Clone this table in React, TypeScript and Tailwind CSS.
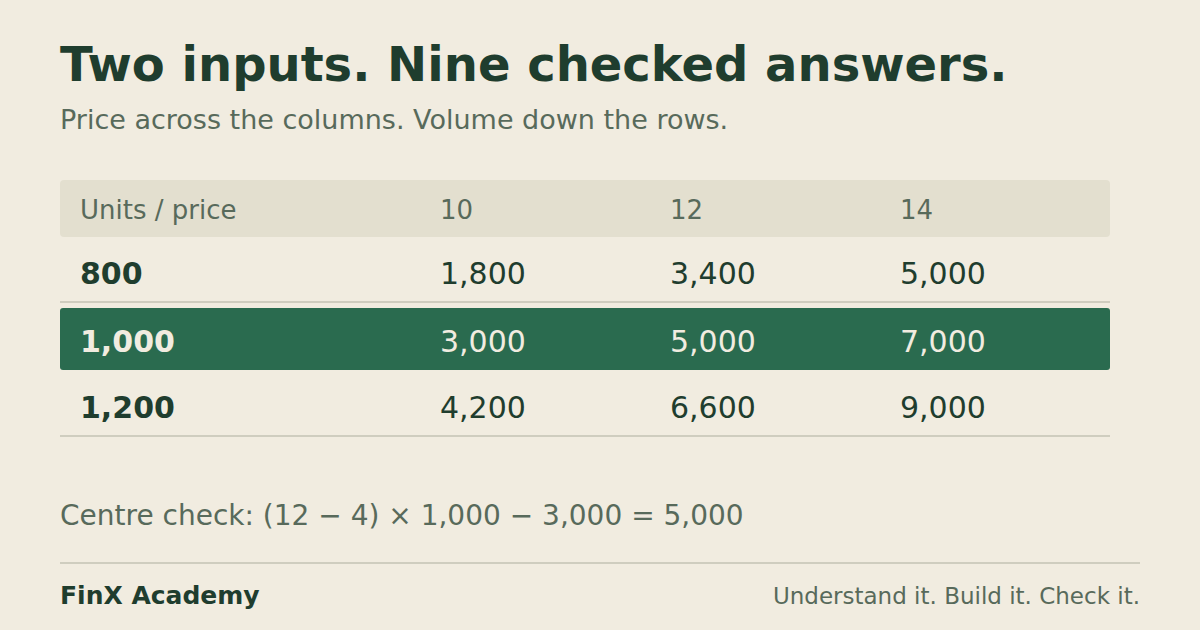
import React from "react";

const rows = [
  { u: "800", v: ["1,800", "3,400", "5,000"], hi: false },
  { u: "1,000", v: ["3,000", "5,000", "7,000"], hi: true },
  { u: "1,200", v: ["4,200", "6,600", "9,000"], hi: false },
];

export default function App() {
  return (
    <div
      className="w-[1200px] h-[630px] bg-[#f1ece0] px-[60px] pt-[36px] flex flex-col overflow-hidden"
      style={{ fontFamily: '"DejaVu Sans", sans-serif' }}
    >
      <h1 className="text-[48px] leading-[56px] font-bold text-[#1f3d2e]">
        Two inputs. Nine checked answers.
      </h1>
      <p className="text-[27px] leading-[32px] mt-[12px] text-[#586a5b]">
        Price across the columns. Volume down the rows.
      </p>

      <div className="w-[1050px] mt-[44px]">
        <div className="grid grid-cols-[360px_230px_230px_230px] h-[57px] pt-[3px] items-center bg-[#e3dfcf] rounded-[4px] text-[26px] text-[#586a5b]">
          <div className="pl-[20px]">Units / price</div>
          <div className="pl-[20px]">10</div>
          <div className="pl-[20px]">12</div>
          <div className="pl-[20px]">14</div>
        </div>
        {rows.map((r, i) =>
          r.hi ? (
            <div
              key={i}
              className="grid grid-cols-[360px_230px_230px_230px] h-[62px] mt-[5px] mb-[1px] pt-[4px] items-center bg-[#2a6b4f] rounded-[3px] text-[30px] text-[#f1ece0]"
            >
              <div className="pl-[20px] font-bold">{r.u}</div>
              {r.v.map((x, j) => (
                <div key={j} className="pl-[20px]">{x}</div>
              ))}
            </div>
          ) : (
            <div
              key={i}
              className="grid grid-cols-[360px_230px_230px_230px] h-[66px] pt-[9px] items-center border-b-2 border-[#cfcdbf] text-[30px] text-[#1f3d2e]"
            >
              <div className="pl-[20px] font-bold">{r.u}</div>
              {r.v.map((x, j) => (
                <div key={j} className="pl-[20px]">{x}</div>
              ))}
            </div>
          )
        )}
      </div>

      <p className="text-[28px] leading-[34px] mt-[62px] text-[#586a5b]">
        Centre check: (12 − 4) × 1,000 − 3,000 = 5,000
      </p>

      <div className="mt-[29px] border-t-2 border-[#cfcdbf] pt-[13px] flex justify-between items-center">
        <span className="text-[25px] font-bold text-[#1f3d2e]">FinX Academy</span>
        <span className="text-[23px] text-[#586a5b]">Understand it. Build it. Check it.</span>
      </div>
    </div>
  );
}
